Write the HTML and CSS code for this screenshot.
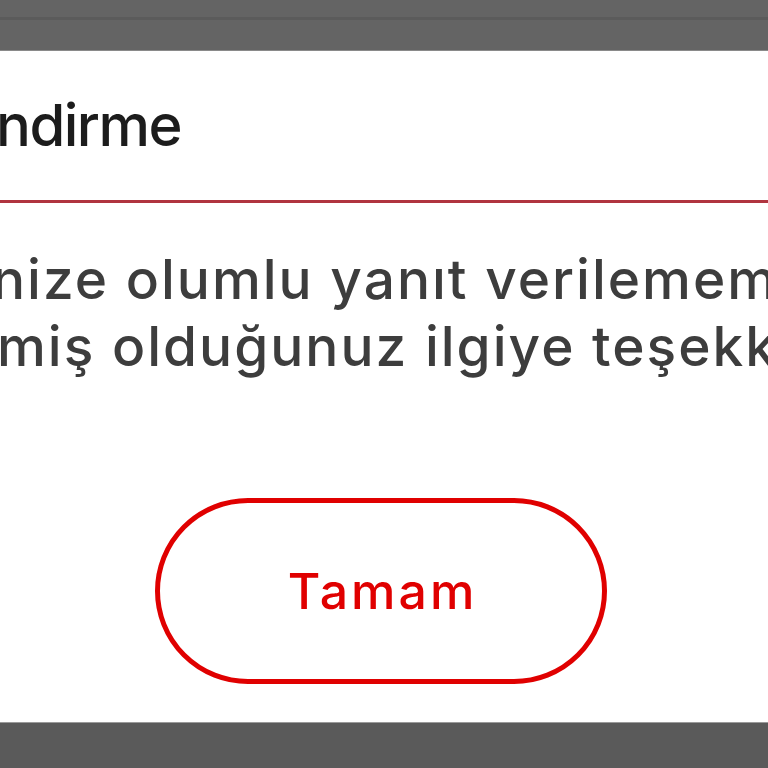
FILE: index.html
```html
<!DOCTYPE html>
<html lang="tr">
<head>
<meta charset="utf-8">
<link rel="stylesheet" href="styles.css">
</head>
<body>
<div class="top"><div class="top-band"></div></div>
<div class="dialog">
  <div class="title">ndirme</div>
  <div class="rule"></div>
  <div class="msg">
    <div class="line line1">nize olumlu yanıt verilememektedir.</div>
    <div class="line line2">miş olduğunuz ilgiye teşekkür ederiz.</div>
  </div>
  <div class="btn">Tamam</div>
</div>
<div class="bottom"></div>
</body>
</html>
```

FILE: styles.css
```css
html, body {
  margin: 0;
  padding: 0;
  width: 768px;
  height: 768px;
  overflow: hidden;
  background: #5a5a5a;
  font-family: "Inter", "Noto Sans", sans-serif;
}
.top {
  height: 51px;
  background: #646464;
  padding-top: 17px;
  box-sizing: border-box;
  border-bottom: 1px solid #8a8a8a;
}
.top-band {
  height: 3px;
  background: #5b5b5b;
}
.dialog {
  height: 671px;
  background: #ffffff;
  overflow: hidden;
  display: flex;
  flex-direction: column;
  border-bottom: 1px solid #9a9a9a;
}
.title {
  padding-top: 45px;
  margin-left: -4px;
  font-size: 58px;
  line-height: 58px;
  font-weight: 550;
  letter-spacing: -1.5px;
  color: #1c1c1c;
  white-space: nowrap;
}
.rule {
  margin-top: 46px;
  height: 3px;
  background: #b0343f;
  flex: none;
}
.msg {
  margin-top: 43px;
  font-size: 55px;
  line-height: 67px;
  font-weight: 550;
  letter-spacing: 2px;
  color: #3d3d3d;
  white-space: nowrap;
}
.line1 { margin-left: -8px; }
.line2 { margin-left: -3px; }
.btn {
  margin-top: 118px;
  margin-left: 155px;
  width: 452px;
  height: 186px;
  box-sizing: border-box;
  border: 5px solid #e00000;
  border-radius: 93px;
  display: flex;
  align-items: center;
  justify-content: center;
  color: #e00000;
  font-size: 50px;
  font-weight: 550;
  letter-spacing: 3px;
  padding-left: 3px;
  flex: none;
}
.bottom {
  height: 45px;
  background: #5a5a5a;
}
```
